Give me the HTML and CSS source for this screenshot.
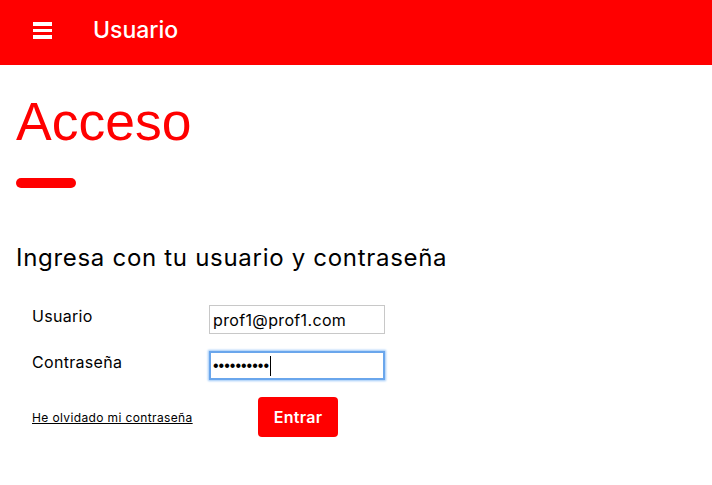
FILE: index.html
```html
<!DOCTYPE html>
<html lang="es">
<head>
<meta charset="utf-8">
<title>Acceso</title>
<link rel="stylesheet" href="styles.css">
</head>
<body>
<header class="topbar">
  <span class="burger" aria-label="Menú"><i></i><i></i><i></i></span>
  <span class="topbar-title">Usuario</span>
</header>
<main class="content">
  <h1 class="title">Acceso</h1>
  <div class="title-bar"></div>
  <h2 class="subtitle">Ingresa con tu usuario y contraseña</h2>
  <form class="login">
    <div class="row">
      <label class="label" for="u">Usuario</label>
      <input class="field" id="u" type="text" value="prof1@prof1.com">
    </div>
    <div class="row">
      <label class="label" for="p">Contraseña</label>
      <span class="field-wrap">
        <input class="field field-focus field-pass" id="p" type="password" value="1234567890">
        <span class="caret"></span>
      </span>
    </div>
    <div class="actions">
      <a class="forgot" href="#">He olvidado mi contraseña</a>
      <button class="btn" type="button">Entrar</button>
    </div>
  </form>
</main>
</body>
</html>
```
FILE: styles.css
```css
html, body {
  margin: 0;
  padding: 0;
  background: #fff;
}
body {
  font-family: "Inter", "Noto Sans", sans-serif;
  color: #000;
}
.topbar {
  height: 65px;
  background: #ff0000;
  display: flex;
  align-items: center;
  padding-left: 33px;
  gap: 41px;
  box-sizing: border-box;
}
.burger {
  display: flex;
  flex-direction: column;
  gap: 3px;
  width: 19px;
  margin-top: -4px;
}
.burger i {
  display: block;
  height: 3.5px;
  background: #fff;
}
.topbar-title {
  color: #fff;
  font-size: 23px;
  font-weight: 500;
  margin-top: -5px;
}
.content {
  padding: 30px 16px 0;
}
.title {
  font-family: "Liberation Sans", Arial, sans-serif;
  font-weight: 400;
  color: #ff0000;
  font-size: 53.5px;
  line-height: 54px;
  margin: 0;
}
.title-bar {
  width: 60px;
  height: 10px;
  border-radius: 5px;
  background: #ff0000;
  margin-top: 29px;
}
.subtitle {
  font-size: 24px;
  font-weight: 400;
  letter-spacing: 0.7px;
  margin: 55px 0 0;
  line-height: 30px;
}
.login {
  padding-left: 16px;
  margin-top: 32px;
}
.row {
  display: flex;
  align-items: flex-start;
  margin-bottom: 17px;
}
.label {
  width: 177px;
  font-size: 16px;
  letter-spacing: 0.3px;
  line-height: 20px;
  padding-top: 1px;
}
.field-wrap {
  position: relative;
  display: block;
}
.field {
  display: block;
  width: 176px;
  height: 29px;
  box-sizing: border-box;
  border: 1px solid #c8c8c8;
  font-family: inherit;
  font-size: 16px;
  letter-spacing: 0.35px;
  padding: 0 3px;
  margin: 0;
  outline: none;
  color: #000;
}
.field-focus {
  border: 2px solid #6aa6ec;
  box-shadow: 0 0 2px 1px #9cc8f8;
}
.field-pass {
  font-family: "Liberation Sans", Arial, sans-serif;
  letter-spacing: 0;
  padding-left: 2px;
}
.caret {
  position: absolute;
  left: 61px;
  top: 5px;
  width: 1px;
  height: 20px;
  background: #000;
}
.actions {
  display: flex;
  align-items: center;
}
.forgot {
  color: #000;
  font-size: 12px;
  letter-spacing: 0.37px;
  width: 226px;
  text-decoration: underline;
}
.btn {
  width: 80px;
  height: 40px;
  background: #ff0000;
  color: #fff;
  border: none;
  border-radius: 4px;
  font-family: inherit;
  font-size: 16px;
  font-weight: 600;
  letter-spacing: 0.3px;
  padding: 0;
}
```
